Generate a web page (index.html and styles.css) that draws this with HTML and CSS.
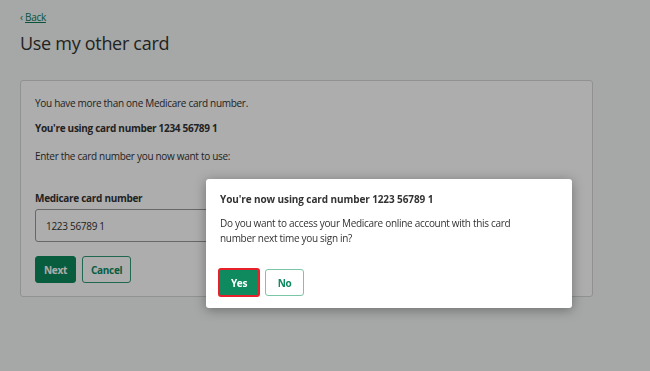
FILE: index.html
```html
<!DOCTYPE html>
<html lang="en">

<head>
    <meta charset="UTF-8">
    <meta name="viewport" content="width=device-width, initial-scale=1.0">
    <title>Use my other card</title>
    <link rel="stylesheet" href="styles.css">
</head>

<body>

    <div class="page">
        <a class="back-link" href="#"><span class="chevron">&lsaquo;</span> <span class="back-text">Back</span></a>
        <h1>Use my other card</h1>

        <div class="card-panel">
            <p>You have more than one Medicare card number.</p>
            <p class="strong">You're using card number 1234 56789 1</p>
            <p class="spaced">Enter the card number you now want to use:</p>

            <label for="cardNumber">Medicare card number</label>
            <input type="text" id="cardNumber" value="1223 56789 1">

            <div class="actions">
                <button class="btn btn-primary">Next</button>
                <button class="btn btn-secondary">Cancel</button>
            </div>
        </div>
    </div>

    <div class="overlay"></div>

    <div class="modal">
        <h2>You're now using card number 1223 56789 1</h2>
        <p>Do you want to access your Medicare online account with this card number next time you sign in?</p>
        <div class="modal-actions">
            <button class="btn btn-primary btn-focus">Yes</button>
            <button class="btn btn-secondary">No</button>
        </div>
    </div>

</body>

</html>
```

FILE: styles.css
```css
body {
    font-family: 'Open Sans', 'Noto Sans', sans-serif;
    font-size: 10px;
    letter-spacing: -0.3px;
    color: #333;
    margin: 0;
    background: #f4f8f5;
}

.page {
    padding: 10px 20px 20px;
}

.back-link {
    color: #0b7a55;
    font-size: 10px;
    text-decoration: none;
}

.back-link .back-text {
    text-decoration: underline;
}

h1 {
    font-size: 18px;
    font-weight: 400;
    margin: 7px 0 25px;
}

.card-panel {
    width: 543px;
    background: white;
    border: 1px solid #d6d6d6;
    border-radius: 3px;
    padding: 15px 14px 13px;
}

.card-panel p {
    margin: 0 0 11px;
}

.card-panel .strong {
    font-weight: bold;
    margin-bottom: 14px;
}

.card-panel .spaced {
    margin-bottom: 28px;
}

.card-panel label {
    display: block;
    font-weight: bold;
    margin-bottom: 4px;
}

.card-panel input {
    width: 250px;
    height: 33px;
    box-sizing: border-box;
    padding: 0 10px;
    border: 1px solid #999;
    border-radius: 3px;
    font-family: inherit;
    font-size: 10px;
    letter-spacing: -0.3px;
    color: #333;
}

.actions {
    display: flex;
    gap: 6px;
    margin-top: 14px;
}

.btn {
    font-family: inherit;
    font-size: 10px;
    font-weight: bold;
    letter-spacing: -0.3px;
    height: 27px;
    padding: 0 8px;
    border-radius: 3px;
    cursor: pointer;
}

.btn-primary {
    background: #0e8a5e;
    color: white;
    border: 1px solid #0e8a5e;
}

.btn-secondary {
    background: white;
    color: #0e8a5e;
    border: 1px solid #7cc6a8;
}

.card-panel .btn-secondary {
    border-color: #2f9a72;
}

.overlay {
    position: fixed;
    top: 0;
    left: 0;
    right: 0;
    bottom: 0;
    background: rgba(0, 0, 0, 0.32);
}

.modal {
    position: absolute;
    left: 206px;
    top: 179px;
    width: 366px;
    height: 129px;
    box-sizing: border-box;
    background: white;
    border-radius: 3px;
    padding: 13px 14px;
    box-shadow: 0 2px 12px rgba(0, 0, 0, 0.35);
}

.modal h2 {
    font-size: 10px;
    letter-spacing: -0.1px;
    margin: 0 0 10px;
}

.modal p {
    width: 310px;
    margin: 0 0 22px;
    line-height: 15px;
}

.modal-actions {
    display: flex;
    align-items: center;
    gap: 5px;
    margin-left: -2px;
}

.modal .btn-primary {
    width: 42px;
    height: 29px;
    padding: 0;
}

.modal .btn-secondary {
    width: 39px;
    padding: 0;
}

.btn-focus {
    border: 2px solid #e8202a;
}
```
